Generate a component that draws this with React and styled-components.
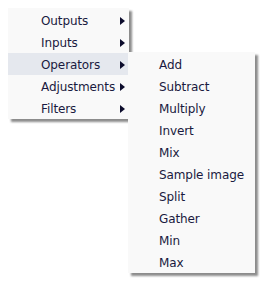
import React from "react";
import styled, { createGlobalStyle } from "styled-components";

const GlobalStyle = createGlobalStyle`
  body {
    margin: 0;
    background: #fff;
    font-family: "DejaVu Sans", Verdana, sans-serif;
  }
`;

const Page = styled.div`
  display: flex;
  align-items: flex-start;
  padding: 8px;
  min-height: 285px;
  box-sizing: border-box;
`;

const Menu = styled.ul`
  list-style: none;
  margin: ${(p) => p.$offset || 0}px 0 0 ${(p) => p.$shift || 0}px;
  padding: 1px 0 0;
  width: ${(p) => p.$width}px;
  flex-shrink: 0;
  background: #f9f9f9;
  box-shadow: 3px 3px 2px rgba(0, 0, 0, 0.45);
`;

const Item = styled.li`
  height: 22px;
  display: flex;
  align-items: center;
  padding-left: ${(p) => p.$indent}px;
  padding-right: 4px;
  background: ${(p) => (p.$active ? "#e5e8ee" : "transparent")};
  color: #1a1a40;
  font-size: 12px;
`;

const Label = styled.span`
  flex: 1;
  white-space: nowrap;
  padding-top: 2px;
  letter-spacing: -0.1px;
`;

const Arrow = styled.span`
  width: 0;
  height: 0;
  border-top: 4.5px solid transparent;
  border-bottom: 4.5px solid transparent;
  border-left: 5px solid #0c0c2c;
  margin-top: 1px;
`;

const main = ["Outputs", "Inputs", "Operators", "Adjustments", "Filters"];
const ops = [
  "Add",
  "Subtract",
  "Multiply",
  "Invert",
  "Mix",
  "Sample image",
  "Split",
  "Gather",
  "Min",
  "Max",
];

export default function App() {
  return (
    <Page>
      <GlobalStyle />
      <Menu $width={121}>
        {main.map((m) => (
          <Item key={m} $indent={33} $active={m === "Operators"}>
            <Label>{m}</Label>
            <Arrow />
          </Item>
        ))}
      </Menu>
      <Menu $width={127} $offset={44} $shift={-1}>
        {ops.map((o) => (
          <Item key={o} $indent={31}>
            <Label>{o}</Label>
          </Item>
        ))}
      </Menu>
    </Page>
  );
}
